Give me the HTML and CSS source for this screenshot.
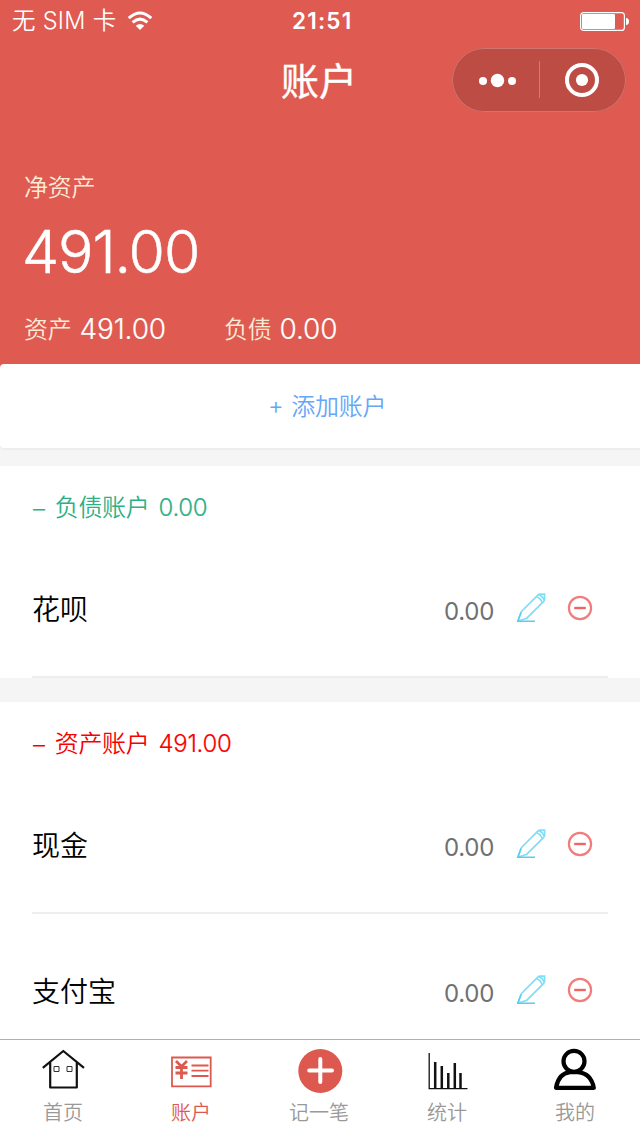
FILE: index.html
```html
<!DOCTYPE html>
<html lang="zh-CN">
<head>
<meta charset="utf-8">
<title>账户</title>
<link rel="stylesheet" href="styles.css">
</head>
<body>
<svg class="symbols" width="0" height="0">
  <symbol id="pencil" viewBox="0 0 30 30">
    <g fill="none" stroke="#80dff8" stroke-width="1.7">
      <path d="M1.8 28.3 5.5 18.5 21.8 2.2Q23 1 24.5 1.2H28.6V6Q28.6 7.5 27.5 8.6L10.8 25.2 1.8 28.3"/>
      <path d="M20.5 3.8Q24.8 5 26.2 9.8M23 2Q27 3.2 28 7.2"/>
      <path stroke="#57cdf2" stroke-width="1.5" d="M5 19.5 1.8 28.3H19"/>
    </g>
  </symbol>
  <symbol id="minus" viewBox="0 0 26 26">
    <circle cx="13" cy="13" r="11.1" fill="none" stroke="#f27c7c" stroke-width="2.2"/>
    <path d="M7.2 13H18.8" stroke="#f06464" stroke-width="2.4"/>
  </symbol>
</svg>
<div class="screen">
  <header class="hero">
    <div class="status">
      <span class="carrier">无 SIM 卡</span>
      <svg class="wifi" width="26" height="20" viewBox="0 0 26 20"><g fill="none" stroke="#fff" stroke-width="3"><path d="M1.7 7.2Q13-3.2 24.3 7.2"/><path d="M5.6 11.4Q13 4.9 20.4 11.4"/></g><path fill="#fff" d="M13 19 8.7 14.7Q13 11.3 17.3 14.7Z"/></svg>
      <span class="clock">21:51</span>
      <svg class="battery" width="50" height="20" viewBox="0 0 50 20"><rect x=".6" y=".6" width="43.8" height="17.8" rx="3" fill="none" stroke="#fff" stroke-width="1.2"/><rect x="2" y="2" width="33" height="15" rx="1" fill="#fff"/><path fill="#fff" d="M46 6Q49 6.3 49 9.5T46 13Z"/></svg>
    </div>
    <div class="nav">
      <h1 class="title">账户</h1>
      <div class="capsule">
        <svg width="174" height="64" viewBox="0 0 174 64"><g fill="#fff"><circle cx="31" cy="33" r="4"/><circle cx="45.5" cy="32.5" r="6.7"/><circle cx="60" cy="33" r="4"/><circle cx="130" cy="32" r="6.1"/></g><circle cx="130" cy="32" r="15" fill="none" stroke="#fff" stroke-width="4"/><path d="M87.5 13V50" stroke="#d07c75"/></svg>
      </div>
    </div>
    <div class="worth">
      <div class="caption">净资产</div>
      <div class="total">491.00</div>
      <div class="split">
        <div class="part"><span class="caption">资产</span><span class="amount">491.00</span></div>
        <div class="part"><span class="caption">负债</span><span class="amount">0.00</span></div>
      </div>
    </div>
  </header>
  <main class="content">
    <div class="add"><span class="plus">+</span><span>添加账户</span></div>
    <section class="group">
      <h2 class="heading debt"><span class="dash">–</span><span>负债账户</span><span class="sum">0.00</span></h2>
      <div class="row"><span class="name">花呗</span><span class="balance">0.00</span><svg class="pencil"><use href="#pencil"/></svg><svg class="minus"><use href="#minus"/></svg></div>
    </section>
    <section class="group">
      <h2 class="heading asset"><span class="dash">–</span><span>资产账户</span><span class="sum">491.00</span></h2>
      <div class="row"><span class="name">现金</span><span class="balance">0.00</span><svg class="pencil"><use href="#pencil"/></svg><svg class="minus"><use href="#minus"/></svg></div>
      <div class="row"><span class="name">支付宝</span><span class="balance">0.00</span><svg class="pencil"><use href="#pencil"/></svg><svg class="minus"><use href="#minus"/></svg></div>
    </section>
  </main>
  <nav class="tabs">
    <div class="tab"><svg width="48" height="48" viewBox="0 0 48 48"><g fill="none" stroke="#111"><path stroke-width="2.2" stroke-linejoin="round" d="M2.8 22.8 23.3 6 44 22.8M10.2 17V42.5H36.8V17"/><path stroke="#333" d="M14 21.5h5v5h-5zM27 21.5h5v5h-5z"/></g></svg><span>首页</span></div>
    <div class="tab active"><svg width="48" height="48" viewBox="0 0 48 48"><g fill="none" stroke="#dd594f"><path stroke-width="1.8" d="M4 12.5H42.7V41.3H4z"/><path stroke-width="2.8" d="M8 16 13.5 21.5 19 16M13.5 21V34M7.5 22.5H19.5M7.5 28H19.5"/><path stroke-width="1.8" d="M23.5 20.5H40.5M23.5 25.7H40.5M23.5 31H40.5"/></g></svg><span>账户</span></div>
    <div class="tab"><svg width="48" height="48" viewBox="0 0 48 48"><circle cx="24.3" cy="26" r="22" fill="#dd594f"/><path fill="none" stroke="#fff" stroke-width="4" stroke-linecap="round" d="M13.2 25.5H36M24.3 14V37"/></svg><span>记一笔</span></div>
    <div class="tab"><svg width="48" height="48" viewBox="0 0 48 48"><g fill="none" stroke="#111"><path stroke-width="1.3" d="M5.2 8V43.7H43.5"/><path stroke-width="2.5" d="M11.2 17V43M17.8 21V43M24.3 28V43M30.8 18V43M36.5 28V43"/></g></svg><span>统计</span></div>
    <div class="tab"><svg width="48" height="48" viewBox="0 0 48 48"><g fill="none" stroke="#000" stroke-width="4.2"><circle cx="22" cy="16.3" r="10.5"/><path stroke-linejoin="round" d="M4 42.8Q6.5 28.5 18 27.2H26Q39 28.5 41.8 42.8Z"/></g></svg><span>我的</span></div>
  </nav>
</div>
</body>
</html>
```

FILE: styles.css
```css
* { box-sizing: border-box; }
body { margin: 0; font-family: Inter, "Noto Sans CJK SC DemiLight", "Noto Sans CJK SC", sans-serif; font-weight: 350; }
h1, h2 { margin: 0; font-weight: inherit; }
svg { display: block; flex: none; }
.symbols { position: absolute; }
.screen { width: 640px; height: 1136px; overflow: hidden; display: flex; flex-direction: column; background: #f5f5f5; }
.hero { flex: none; height: 364px; background: #df5a50; color: #fff; }
.status { height: 40px; padding: 0 10px 0 12px; display: grid; grid-template-columns: 115px 165px 1fr 50px; align-items: center; line-height: 42px; }
.carrier { font-size: 23.5px; white-space: nowrap; letter-spacing: .3px; }
.wifi { margin-top: -1px; }
.clock { font-size: 22.5px; font-weight: 600; letter-spacing: 1.2px; }
.battery { margin-top: 1px; }
.nav { height: 80px; padding: 8px 14px 0 188px; display: flex; justify-content: space-between; }
.title { width: 262px; text-align: center; font-family: "Noto Sans CJK SC", sans-serif; font-size: 38px; font-weight: 400; line-height: 61px; -webkit-text-stroke: .4px #fff; }
.capsule { width: 174px; height: 64px; border-radius: 32px; background: #bd4c45; box-shadow: inset 0 0 0 1px #d0746d; }
.worth { padding: 50px 24px 0; }
.caption { font-size: 24px; line-height: 36px; color: #faebd7; letter-spacing: -.3px; }
.total { margin-left: -2px; font-size: 59px; line-height: 92px; letter-spacing: -1.1px; -webkit-text-stroke: .5px #fff; }
.split { display: flex; height: 62px; align-items: center; }
.part { width: 200px; display: flex; gap: 8px; align-items: center; }
.part .caption { padding-top: 2px; }
.amount { font-size: 28px; line-height: 40px; letter-spacing: -.1px; -webkit-text-stroke: .2px #fff; }
.content { flex: 1; min-height: 0; overflow: hidden; background: linear-gradient(#df5a50 8px, #f5f5f5 8px); }
.add { width: 654px; height: 84px; padding-bottom: 4px; margin-bottom: 18px; border-radius: 4px; background: #fff; box-shadow: 0 2px 0 #f0eded; color: #66a6f8; display: flex; align-items: center; justify-content: center; gap: 8px; font-size: 24px; letter-spacing: -.3px; }
.plus { padding-top: 3px; }
.group { background: #fff; padding: 0 32px; margin-bottom: 24px; }
.heading { height: 66px; padding: 24px 0 0 1px; display: flex; gap: 10px; font-size: 24px; line-height: 36px; letter-spacing: -.3px; }
.dash { padding-top: 1px; }
.sum { margin-left: -1px; -webkit-text-stroke: .2px; }
.debt { color: #2eb086; }
.asset { color: #f90000; }
.row { height: 146px; padding: 8px 15px 0 0; border-bottom: 2px solid #efeded; display: flex; align-items: center; }
.name { flex: 1; font-size: 28px; font-weight: 350; color: #000; }
.balance { font-size: 24px; font-weight: 400; color: #707070; padding-top: 6px; letter-spacing: -.3px; }
.pencil { width: 30px; height: 30px; margin-left: 22px; }
.minus { width: 26px; height: 26px; margin-left: 21px; }
.tabs { flex: none; height: 97px; border-top: 1px solid #b0b0b0; background: #fff; display: flex; padding-top: 5px; }
.tab { flex: 1; display: flex; flex-direction: column; align-items: center; font-size: 20px; line-height: 32px; color: #999; padding-right: 1px; }
.tab svg { margin-bottom: 4px; }
.tab span { margin-left: -1px; }
.active { color: #dd594f; }
```
